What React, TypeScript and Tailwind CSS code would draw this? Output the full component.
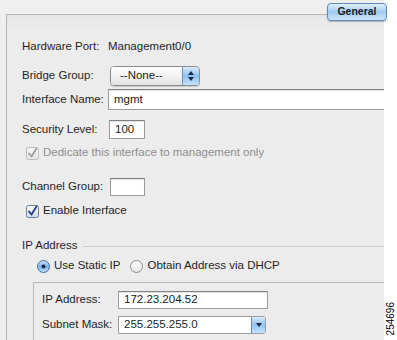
import React from 'react';

const font = { fontFamily: '"Liberation Sans", Arial, sans-serif' };

function TextBox({ value, className }: { value?: string; className: string }) {
  return (
    <div
      className={`flex items-center bg-white border border-[#9c9c9c] border-t-[#7f7f7f] pl-[5px] text-[#1c1c1c] shadow-[inset_0_1px_1px_rgba(0,0,0,0.12)] ${className}`}
    >
      {value}
    </div>
  );
}

function Check({ disabled }: { disabled?: boolean }) {
  return (
    <svg width="13" height="13" viewBox="0 0 13 13" className="shrink-0">
      <defs>
        <linearGradient id={disabled ? 'cbd' : 'cbe'} x1="0" y1="0" x2="0" y2="1">
          <stop offset="0" stopColor={disabled ? '#f6f6f6' : '#ffffff'} />
          <stop offset="1" stopColor={disabled ? '#e4e4e4' : '#c9d9ec'} />
        </linearGradient>
      </defs>
      <rect
        x="0.5"
        y="0.5"
        width="12"
        height="12"
        rx="2"
        fill={`url(#${disabled ? 'cbd' : 'cbe'})`}
        stroke={disabled ? '#bdbdbd' : '#6f7f96'}
      />
      <path
        d="M3 6.5 L5.5 9.5 L10.5 1.5"
        fill="none"
        stroke={disabled ? '#9e9e9e' : '#1f3e78'}
        strokeWidth="1.8"
        strokeLinecap="round"
        strokeLinejoin="round"
      />
    </svg>
  );
}

function Radio({ on }: { on?: boolean }) {
  return (
    <svg width="13" height="13" viewBox="0 0 13 13" className="shrink-0">
      <defs>
        <linearGradient id={on ? 'rOn' : 'rOff'} x1="0" y1="0" x2="0" y2="1">
          <stop offset="0" stopColor={on ? '#cfe4f8' : '#ffffff'} />
          <stop offset="0.5" stopColor={on ? '#7db5ea' : '#f2f2f2'} />
          <stop offset="1" stopColor={on ? '#bfe0fb' : '#e2e2e2'} />
        </linearGradient>
      </defs>
      <circle cx="6.5" cy="6.5" r="6" fill={`url(#${on ? 'rOn' : 'rOff'})`} stroke={on ? '#4a6f9c' : '#8e8e8e'} />
      {on && <circle cx="6.5" cy="6.5" r="2" fill="#1b2a40" />}
    </svg>
  );
}

function Row({ label, className, children }: { label: string; className: string; children?: React.ReactNode }) {
  return (
    <div className={`flex items-center ${className}`}>
      <div className="w-[86px] shrink-0">{label}</div>
      {children}
    </div>
  );
}

export default function App() {
  return (
    <div className="w-[397px] h-[340px] flex bg-white overflow-hidden text-[11.5px] text-[#1f1f1f]" style={font}>
      <div className="relative w-[384px] h-full bg-[#efefef] pt-[14px] pl-[6px]">
        {/* General tab */}
        <div className="absolute left-[327px] top-[3px] w-[60px] h-[18px] rounded-[4px] border border-[#5a8bc2] bg-gradient-to-b from-[#e4f1fc] via-[#9fcbf0] to-[#cfe7fb] flex items-center justify-center text-[10.5px] font-bold text-[#1a1a1a] shadow-[0_1px_1px_rgba(0,0,0,0.25)]">
          General
        </div>

        <div className="h-full border-t border-l border-[#b4b4b4] bg-gradient-to-b from-[#e6e6e6] from-[0px] to-[#ececec] to-[14px] pt-[22px] pl-[15px] overflow-hidden">
          <Row label="Hardware Port:" className="h-[20px]">
            <span>Management0/0</span>
          </Row>

          <Row label="Bridge Group:" className="h-[20px] mt-[9px]">
            <div className="ml-[2px] w-[90px] h-[20px] flex rounded-[4px] border border-[#8c8c8c] overflow-hidden shadow-[0_1px_1px_rgba(0,0,0,0.15)]">
              <div className="flex-1 flex items-center pl-[9px] bg-gradient-to-b from-[#ffffff] to-[#e3e3e3]">--None--</div>
              <div className="w-[17px] border-l border-[#6a8fbd] bg-gradient-to-b from-[#d8ebfb] via-[#8ec2ef] to-[#c6e3fb] flex flex-col items-center justify-center gap-[2px]">
                <svg width="6" height="4" viewBox="0 0 6 4"><path d="M0 4 L3 0 L6 4 Z" fill="#1b2a40" /></svg>
                <svg width="6" height="4" viewBox="0 0 6 4"><path d="M0 0 L3 4 L6 0 Z" fill="#1b2a40" /></svg>
              </div>
            </div>
          </Row>

          <Row label="Interface Name:" className="h-[21px] mt-[3px]">
            <TextBox value="mgmt" className="w-[300px] shrink-0 h-[21px]" />
          </Row>

          <Row label="Security Level:" className="h-[19px] mt-[10px]">
            <TextBox value="100" className="ml-[1px] w-[36px] h-[19px]" />
          </Row>

          <div className="flex items-center h-[16px] mt-[6px] ml-[4px] gap-[4px] text-[#8e8e8e]">
            <Check disabled />
            <span>Dedicate this interface to management only</span>
          </div>

          <Row label="Channel Group:" className="h-[18px] mt-[17px]">
            <TextBox className="ml-[2px] w-[35px] h-[18px]" />
          </Row>

          <div className="flex items-center h-[16px] mt-[7px] ml-[4px] gap-[4px]">
            <Check />
            <span>Enable Interface</span>
          </div>

          <div className="flex items-center h-[16px] mt-[19px] gap-[6px]">
            <span>IP Address</span>
            <div className="flex-1 h-px bg-[#cfcfcf]" />
          </div>

          <div className="flex items-center h-[16px] mt-[4px] ml-[15px]">
            <Radio on />
            <span className="ml-[4px]">Use Static IP</span>
            <span className="ml-[10px]">
              <Radio />
            </span>
            <span className="ml-[4px]">Obtain Address via DHCP</span>
          </div>

          <div className="mt-[8px] ml-[11px] border-t border-l border-[#b9b9b9] pt-[8px] pl-[8px] h-[80px]">
            <div className="flex items-center h-[18px]">
              <div className="w-[76px] shrink-0">IP Address:</div>
              <TextBox value="172.23.204.52" className="w-[150px] h-[18px]" />
            </div>
            <div className="flex items-center h-[18px] mt-[7px]">
              <div className="w-[76px] shrink-0">Subnet Mask:</div>
              <div className="w-[148px] h-[18px] flex bg-white border border-[#9c9c9c] rounded-r-[3px] overflow-hidden">
                <div className="flex-1 flex items-center pl-[5px]">255.255.255.0</div>
                <div className="w-[14px] border-l border-[#6a8fbd] bg-gradient-to-b from-[#d8ebfb] via-[#8ec2ef] to-[#c6e3fb] flex items-center justify-center">
                  <svg width="6" height="4" viewBox="0 0 6 4"><path d="M0 0 L3 4 L6 0 Z" fill="#1b2a40" /></svg>
                </div>
              </div>
            </div>
          </div>
        </div>
      </div>

      <div className="flex-1 flex items-end justify-center pb-[4px]">
        <div className="[writing-mode:vertical-rl] rotate-180 text-[10px] text-black leading-none mb-[1px]">254696</div>
      </div>
    </div>
  );
}
